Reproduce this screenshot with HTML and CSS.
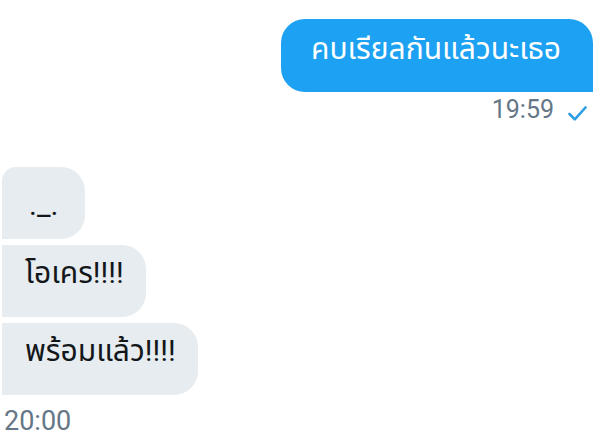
FILE: index.html
```html
<!DOCTYPE html>
<html lang="th">
<head>
<meta charset="utf-8">
<link rel="stylesheet" href="styles.css">
</head>
<body>
<div class="chat">
  <div class="out-group">
    <div class="bubble out">คบเรียลกันแล้วนะเธอ</div>
    <div class="meta out-meta">
      <span class="time">19:59</span>
      <svg class="check" width="19" height="15" viewBox="0 0 19 15"><polyline points="1.5,8 6.8,13.3 17.5,1.5" fill="none" stroke="#2d9ee6" stroke-width="2.6" stroke-linecap="round" stroke-linejoin="round"/></svg>
    </div>
  </div>
  <div class="in-group">
    <div class="bubble in first">._.</div>
    <div class="bubble in">โอเคร!!!!</div>
    <div class="bubble in">พร้อมแล้ว!!!!</div>
    <div class="meta in-meta"><span class="time">20:00</span></div>
  </div>
</div>
</body>
</html>
```
FILE: styles.css
```css
html, body {
  margin: 0;
  padding: 0;
  background: #ffffff;
}
body {
  width: 612px;
  height: 442px;
  overflow: hidden;
  font-family: Roboto, "Noto Sans Thai", "Noto Sans", sans-serif;
}
.chat {
  display: flex;
  flex-direction: column;
}
.out-group {
  display: flex;
  flex-direction: column;
  align-items: flex-end;
  padding-top: 19px;
  padding-right: 19px;
}
.bubble {
  font-size: 30px;
  line-height: 36px;
  white-space: nowrap;
}
.out {
  background: #1da1f2;
  color: #ffffff;
  padding: 12px 32px 25px 30px;
  border-radius: 24px 24px 0 24px;
}
.meta {
  display: flex;
  align-items: center;
}
.time {
  color: #657786;
  font-size: 25px;
  line-height: 28px;
}
.out-meta {
  margin-top: 4px;
  margin-right: 6px;
  gap: 14px;
}
.check {
  margin-top: 6px;
}
.in-group {
  display: flex;
  flex-direction: column;
  align-items: flex-start;
  gap: 6px;
  margin-top: 43px;
  padding-left: 2px;
}
.in {
  background: #e6ecf0;
  color: #14171a;
  padding: 10px 22px 26px 23px;
  border-radius: 0 24px 24px 0;
}
.in.first {
  border-radius: 14px 24px 24px 0;
  padding: 20px 27px 16px 27px;
}
.in-meta {
  margin-top: 5px;
  padding-left: 2px;
}
.in-meta .time {
  font-size: 27px;
  line-height: 30px;
}
```
